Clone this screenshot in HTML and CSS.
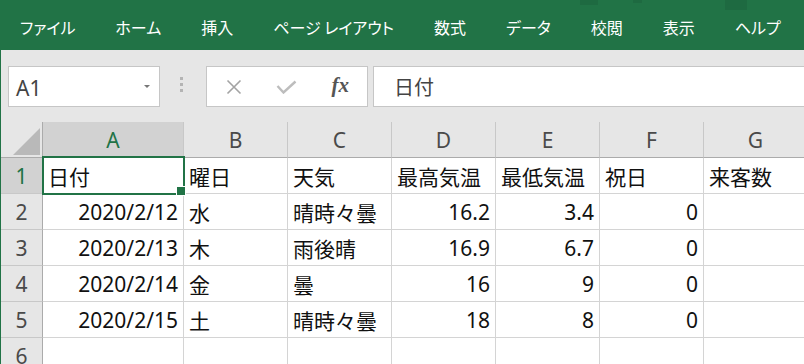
FILE: index.html
```html
<!DOCTYPE html>
<html lang="ja">

<head>
  <meta charset="UTF-8" />
  <title>Book1 - Excel</title>
  <link rel="stylesheet" href="styles.css">
</head>

<body>
  <div class="ribbon">
    <span class="tab">ファイル</span>
    <span class="tab">ホーム</span>
    <span class="tab">挿入</span>
    <span class="tab">ページ レイアウト</span>
    <span class="tab">数式</span>
    <span class="tab">データ</span>
    <span class="tab">校閲</span>
    <span class="tab">表示</span>
    <span class="tab">ヘルプ</span>
    <span class="ghost g1"></span>
    <span class="ghost g2"></span>
    <span class="ghost g3"></span>
  </div>

  <div class="workspace">
    <div class="formula-bar">
      <div class="name-box">
        <span>A1</span>
        <span class="caret"></span>
      </div>
      <div class="grip"><i></i><i></i><i></i></div>
      <div class="fx-buttons">
        <span>
          <svg width="16" height="16" viewBox="0 0 16 16">
            <path d="M1.5 1.5 L14.5 14.5 M14.5 1.5 L1.5 14.5" stroke="#a3a3a3" stroke-width="1.6" fill="none" />
          </svg>
        </span>
        <span>
          <svg width="21" height="14" viewBox="0 0 21 14">
            <path d="M1.5 6 L7.5 12.5 L19.5 1.5" stroke="#bdbdbd" stroke-width="2.4" fill="none" />
          </svg>
        </span>
        <span class="fx">fx</span>
      </div>
      <div class="formula-input">日付</div>
    </div>

    <div class="sheet">
      <div class="corner">
        <svg width="27" height="27" viewBox="0 0 27 27">
          <polygon points="27,0 27,27 0,27" fill="#b9b9b9" />
        </svg>
      </div>
      <div class="col-head sel">A</div>
      <div class="col-head">B</div>
      <div class="col-head">C</div>
      <div class="col-head">D</div>
      <div class="col-head">E</div>
      <div class="col-head">F</div>
      <div class="col-head">G</div>

      <div class="row-head sel">1</div>
      <div class="cell active">日付</div>
      <div class="cell">曜日</div>
      <div class="cell">天気</div>
      <div class="cell">最高気温</div>
      <div class="cell">最低気温</div>
      <div class="cell">祝日</div>
      <div class="cell">来客数</div>

      <div class="row-head">2</div>
      <div class="cell num">2020/2/12</div>
      <div class="cell">水</div>
      <div class="cell">晴時々曇</div>
      <div class="cell num">16.2</div>
      <div class="cell num">3.4</div>
      <div class="cell num">0</div>
      <div class="cell"></div>

      <div class="row-head">3</div>
      <div class="cell num">2020/2/13</div>
      <div class="cell">木</div>
      <div class="cell">雨後晴</div>
      <div class="cell num">16.9</div>
      <div class="cell num">6.7</div>
      <div class="cell num">0</div>
      <div class="cell"></div>

      <div class="row-head">4</div>
      <div class="cell num">2020/2/14</div>
      <div class="cell">金</div>
      <div class="cell">曇</div>
      <div class="cell num">16</div>
      <div class="cell num">9</div>
      <div class="cell num">0</div>
      <div class="cell"></div>

      <div class="row-head">5</div>
      <div class="cell num">2020/2/15</div>
      <div class="cell">土</div>
      <div class="cell">晴時々曇</div>
      <div class="cell num">18</div>
      <div class="cell num">8</div>
      <div class="cell num">0</div>
      <div class="cell"></div>

      <div class="row-head">6</div>
      <div class="cell"></div>
      <div class="cell"></div>
      <div class="cell"></div>
      <div class="cell"></div>
      <div class="cell"></div>
      <div class="cell"></div>
      <div class="cell"></div>
    </div>
  </div>
</body>

</html>
```

FILE: styles.css
```css
* {
  box-sizing: border-box;
}

body {
  margin: 0;
  width: 804px;
  height: 364px;
  overflow: hidden;
  background-color: #fff;
  font-family: 'Noto Sans', 'Noto Sans CJK JP', sans-serif;
}

/* ribbon tabs */
.ribbon {
  position: relative;
  height: 50px;
  padding-top: 4px;
  background-color: #217346;
  display: flex;
  align-items: center;
  color: #fff;
  font-family: 'Noto Sans CJK JP', sans-serif;
  font-size: 16px;
  font-feature-settings: "palt";
}

.tab {
  padding: 0 20px;
  white-space: nowrap;
}

.ghost {
  position: absolute;
  top: 0;
  background-color: rgba(0, 0, 0, 0.07);
}

.g1 { left: 580px; width: 18px; height: 5px; }
.g2 { left: 633px; width: 9px; height: 3px; }
.g3 { left: 725px; width: 22px; height: 10px; }

/* formula bar */
.workspace {
  border-left: 1px solid #217346;
  background-color: #e6e6e6;
}

.formula-bar {
  display: flex;
  height: 72px;
  padding: 16px 0 15px 7px;
}

.name-box {
  width: 152px;
  background-color: #fff;
  border: 1px solid #c6c6c6;
  display: flex;
  align-items: center;
  justify-content: space-between;
  padding: 2px 9px 0 7px;
  font-size: 21px;
  color: #444;
}

.caret {
  border-left: 3px solid transparent;
  border-right: 3px solid transparent;
  border-top: 3px solid #777;
  margin-bottom: 3px;
}

.grip {
  width: 46px;
  display: flex;
  flex-direction: column;
  justify-content: center;
  gap: 3px;
  padding: 0 0 4px 20px;
}

.grip i {
  width: 3px;
  height: 3px;
  background-color: #b4b4b4;
}

.fx-buttons {
  width: 162px;
  background-color: #fff;
  border: 1px solid #c6c6c6;
  display: flex;
}

.fx-buttons span {
  flex: 1;
  display: flex;
  align-items: center;
  justify-content: center;
}

.fx-buttons svg {
  display: block;
}

.fx {
  font-family: 'Liberation Serif', serif;
  font-style: italic;
  font-weight: bold;
  font-size: 21px;
  color: #555;
  padding-bottom: 2px;
}

.formula-input {
  flex: 1;
  margin-left: 5px;
  background-color: #fff;
  border: 1px solid #c6c6c6;
  border-right: 0;
  display: flex;
  align-items: center;
  padding-left: 20px;
  font-family: 'Noto Sans CJK JP', sans-serif;
  font-size: 20px;
  color: #444;
}

/* grid */
.sheet {
  display: grid;
  grid-template-columns: 42px 141px repeat(6, 104px);
  grid-template-rows: 36px repeat(6, 36px);
}

.corner {
  background-color: #e6e6e6;
  border-right: 1px solid #ababab;
  border-bottom: 1px solid #ababab;
  display: flex;
  justify-content: flex-end;
  align-items: flex-end;
  padding: 0 2px 2px 0;
}

.col-head,
.row-head {
  background-color: #e6e6e6;
  display: flex;
  align-items: center;
  justify-content: center;
  font-size: 21px;
  color: #4a4a4a;
}

.col-head {
  border-right: 1px solid #c8c8c8;
  border-bottom: 1px solid #ababab;
}

.row-head {
  border-right: 1px solid #ababab;
  border-bottom: 1px solid #c8c8c8;
}

.col-head.sel,
.row-head.sel {
  background-color: #d2d2d2;
  color: #217346;
}

.cell {
  background-color: #fff;
  border-right: 1px solid #d4d4d4;
  border-bottom: 1px solid #d4d4d4;
  display: flex;
  align-items: center;
  padding: 0 5px;
  font-size: 21px;
  color: #111;
  white-space: nowrap;
  overflow: hidden;
}

.cell.num {
  justify-content: flex-end;
}

.cell.active {
  position: relative;
  overflow: visible;
}

.cell.active::before {
  content: "";
  position: absolute;
  left: -1px;
  top: -2px;
  right: -2px;
  bottom: -2px;
  border: 2px solid #217346;
}

.cell.active::after {
  content: "";
  position: absolute;
  right: -3px;
  bottom: -3px;
  width: 8px;
  height: 8px;
  background-color: #217346;
  border: 1px solid #fff;
}
```
